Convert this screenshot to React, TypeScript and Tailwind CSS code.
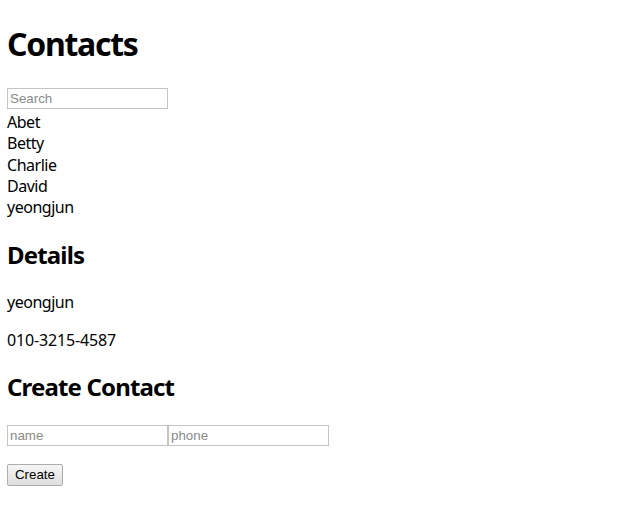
import { useState } from 'react'

type Contact = { name: string; phone: string }

const initial: Contact[] = [
  { name: 'Abet', phone: '010-1111-2222' },
  { name: 'Betty', phone: '010-2222-3333' },
  { name: 'Charlie', phone: '010-3333-4444' },
  { name: 'David', phone: '010-4444-5555' },
  { name: 'yeongjun', phone: '010-3215-4587' },
]

const inputCls =
  "block h-[21px] w-[161px] border border-[#c4c4c4] px-[2px] font-['Liberation_Sans',Arial,sans-serif] text-[13.33px] tracking-normal text-black outline-none placeholder:text-[#8a8a8a]"

export default function App() {
  const [contacts, setContacts] = useState<Contact[]>(initial)
  const [search, setSearch] = useState('')
  const [selected, setSelected] = useState<Contact>(initial[4])
  const [name, setName] = useState('')
  const [phone, setPhone] = useState('')

  const shown = contacts.filter(c => c.name.toLowerCase().includes(search.toLowerCase()))

  function handleCreate() {
    if (!name) return
    setContacts(prev => [...prev, { name, phone }])
    setName('')
    setPhone('')
  }

  return (
    <div className="min-h-screen bg-white px-[7px] font-['Noto_Sans','Noto_Sans_CJK_KR',sans-serif] text-[16px] tracking-[-0.03em] text-black">
      <h1 className="mt-[22px] mb-[23px] text-[32px] font-bold leading-[43px] tracking-[-0.04em]">Contacts</h1>

      {/* Search + list */}
      <input
        className={inputCls}
        placeholder="Search"
        value={search}
        onChange={e => setSearch(e.target.value)}
      />
      <div className="pt-[3px]">
        {shown.map(c => (
          <div key={c.name} className="h-[21.33px] cursor-pointer leading-[21.33px]" onClick={() => setSelected(c)}>
            {c.name}
          </div>
        ))}
      </div>

      {/* Details */}
      <h2 className="mt-[20px] text-[24px] font-bold leading-[32px] tracking-[-0.035em]">Details</h2>
      <p className="mt-[21px] leading-[21.33px]">{selected.name}</p>
      <p className="mt-[16.7px] leading-[21.33px] tracking-[-0.01em]">{selected.phone}</p>

      {/* Create */}
      <h2 className="mt-[20.3px] text-[24px] font-bold leading-[32px] tracking-[-0.035em]">Create Contact</h2>
      <div className="mt-[22px] flex">
        <input className={inputCls} placeholder="name" value={name} onChange={e => setName(e.target.value)} />
        <input className={inputCls} placeholder="phone" value={phone} onChange={e => setPhone(e.target.value)} />
      </div>
      <button
        onClick={handleCreate}
        className="mt-[18px] block h-[22px] w-[56px] rounded-[2px] border border-[#adadad] bg-gradient-to-b from-[#f6f6f6] to-[#dedede] font-['Liberation_Sans',Arial,sans-serif] text-[13.33px] leading-[20px] tracking-normal text-black"
      >
        Create
      </button>
    </div>
  )
}
